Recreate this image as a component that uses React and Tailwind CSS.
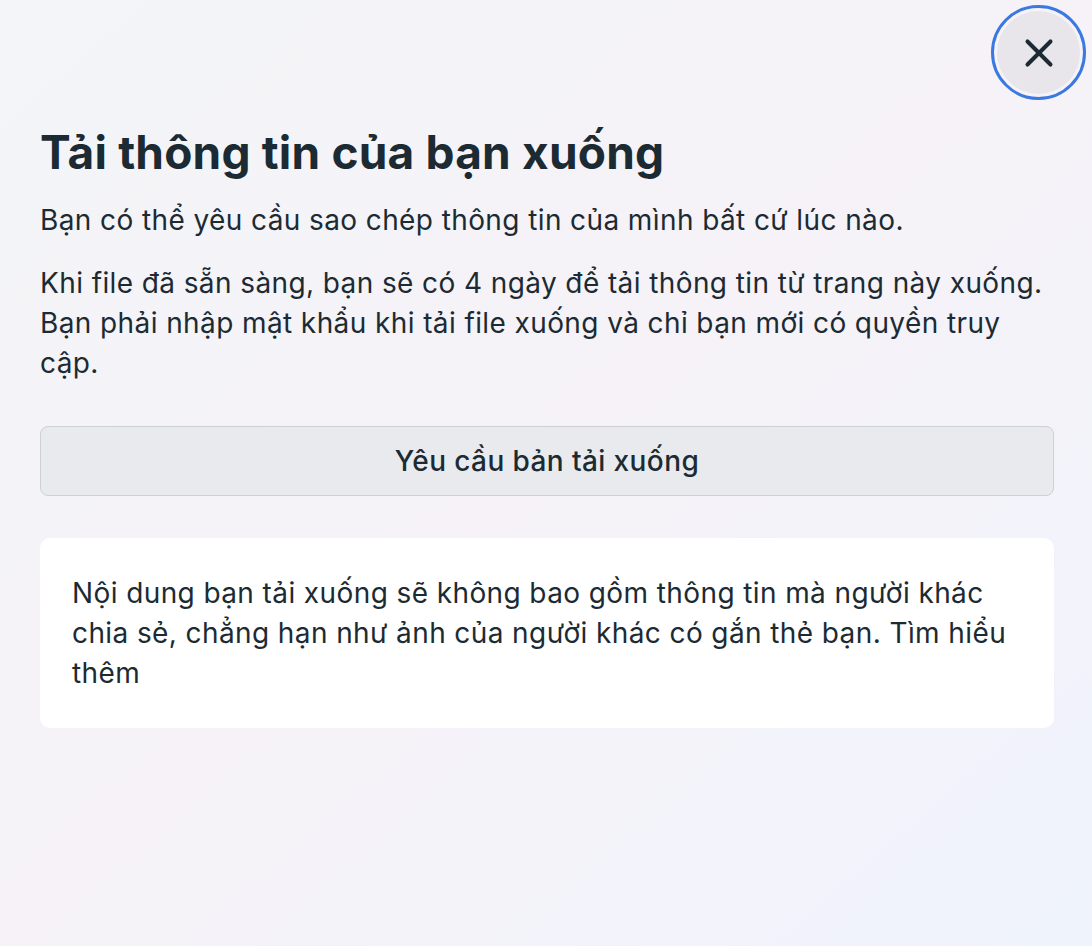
import { X } from "lucide-react";

export default function App() {
    return (
        <div
            className="min-h-[946px] w-full bg-gradient-to-br from-[#f3f5f7] via-[#f6f2f8] to-[#eff3fc] text-[#1c2b33] relative"
            style={{ fontFamily: "Inter, 'Noto Sans', sans-serif" }}
        >
            <button className="absolute right-[6px] top-[5px] w-[95px] h-[95px] rounded-full border-[3px] border-[#3b78e0] p-[3px] bg-transparent">
                <span className="flex w-full h-full rounded-full bg-[#e8e6ea] items-center justify-center">
                    <X className="w-[46px] h-[46px] text-[#1c2b33]" strokeWidth={2.1} />
                </span>
            </button>

            <div className="pl-[40px] pr-[38px] pt-[124px]">
                <h1 className="text-[46px] leading-[56px] font-bold tracking-[0.2px]">
                    Tải thông tin của bạn xuống
                </h1>
                <p className="mt-[20px] text-[28px] leading-[40px] tracking-[0.4px]">
                    Bạn có thể yêu cầu sao chép thông tin của mình bất cứ lúc nào.
                </p>
                <p className="mt-[23px] text-[28px] leading-[40px] tracking-[0.4px]">
                    Khi file đã sẵn sàng, bạn sẽ có 4 ngày để tải thông tin từ trang này xuống. Bạn phải nhập mật khẩu khi tải file xuống và chỉ bạn mới có quyền truy cập.
                </p>

                <button className="mt-[43px] w-full h-[70px] rounded-[8px] border border-[#cdd0d5] bg-[#e8eaee] text-[28px] tracking-[0.4px] font-medium">
                    Yêu cầu bản tải xuống
                </button>

                <div className="mt-[42px] bg-white rounded-[10px] px-[32px] pt-[35px] pb-[35px]">
                    <p className="text-[28px] leading-[40px] tracking-[0.4px]">
                        Nội dung bạn tải xuống sẽ không bao gồm thông tin mà người khác chia sẻ, chẳng hạn như ảnh của người khác có gắn thẻ bạn. Tìm hiểu thêm
                    </p>
                </div>
            </div>
        </div>
    );
}
